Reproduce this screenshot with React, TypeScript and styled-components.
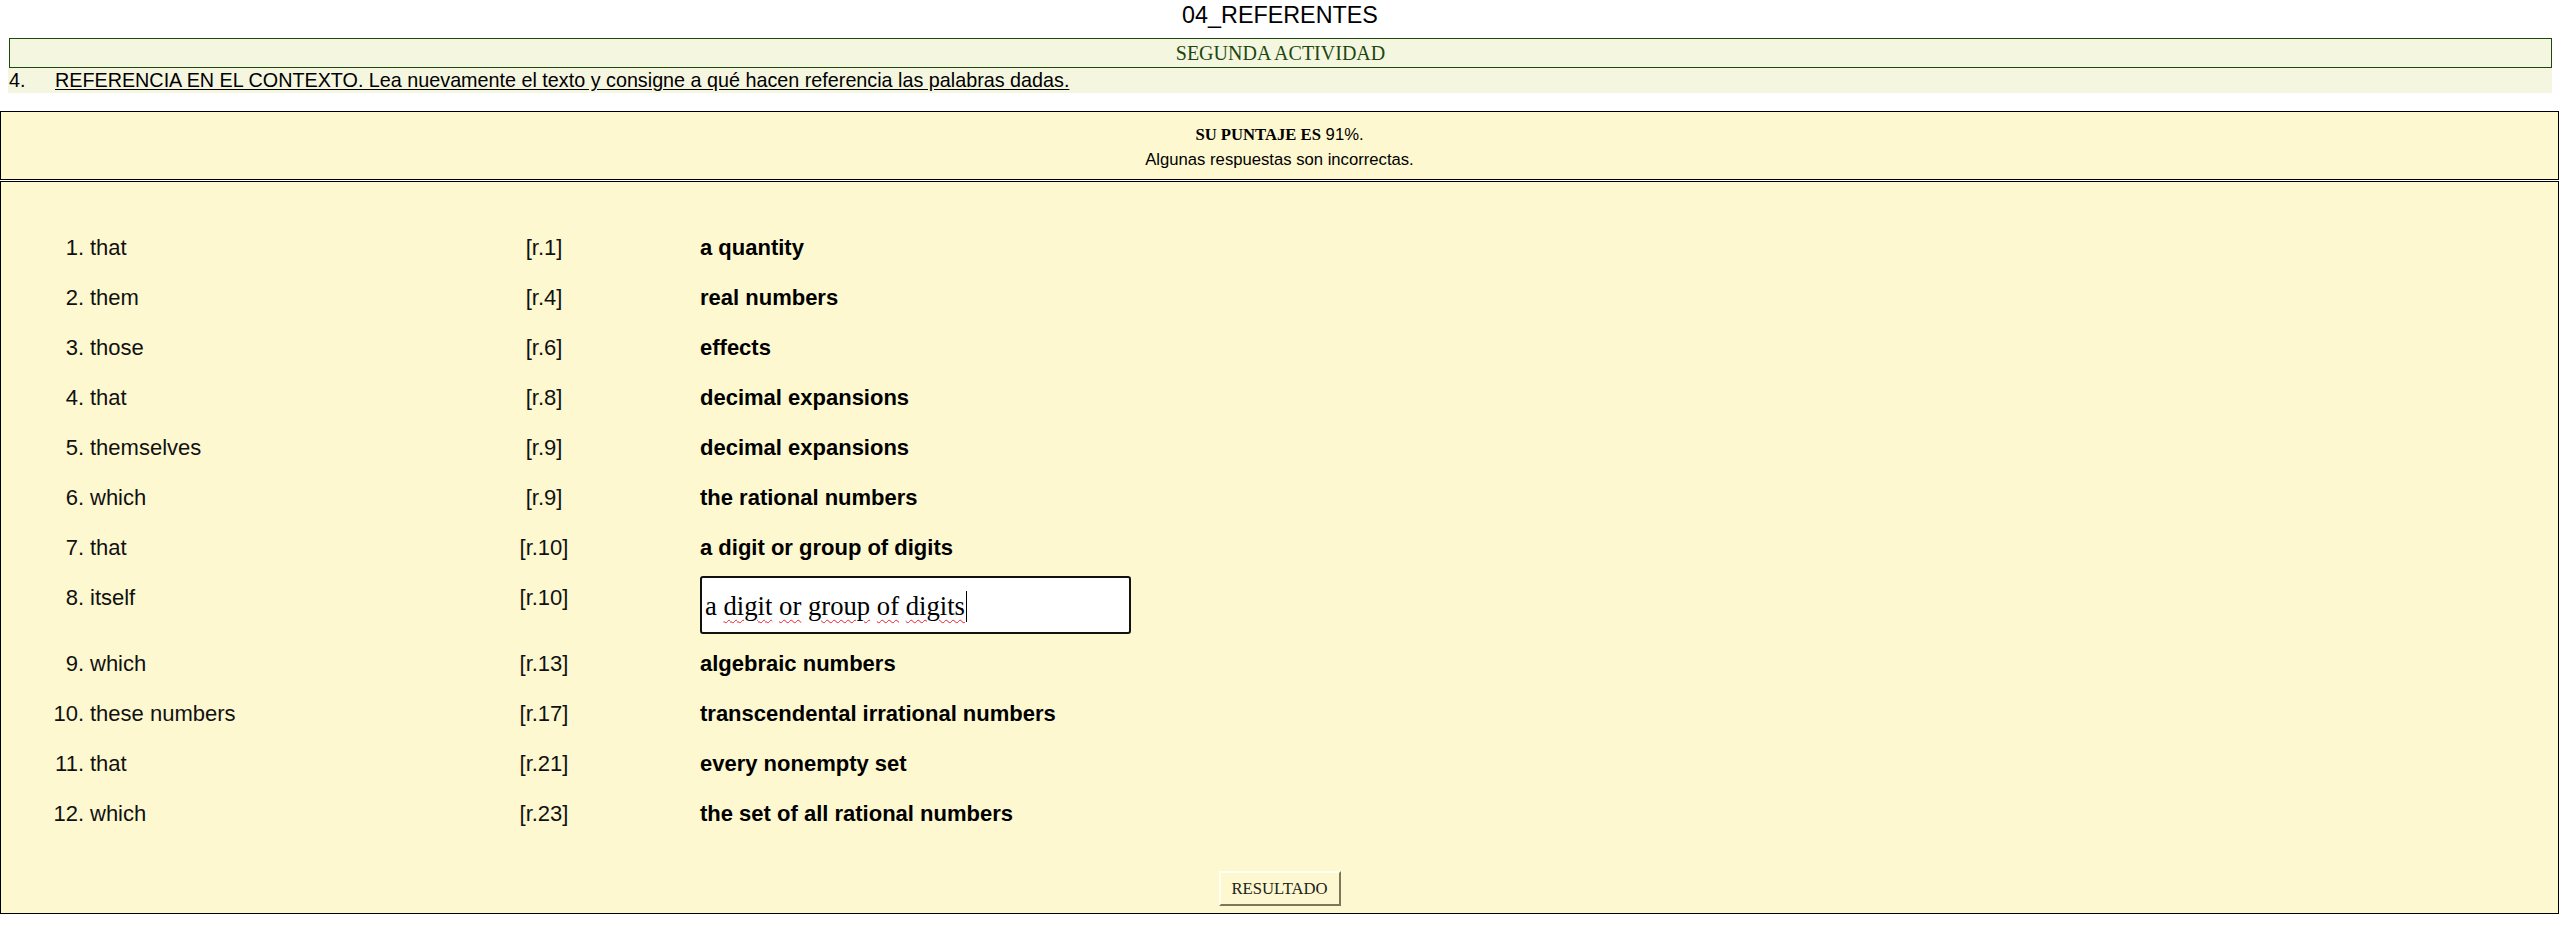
import React from "react";
import styled, { createGlobalStyle } from "styled-components";

const GlobalStyle = createGlobalStyle`
  html, body {
    margin: 0;
    padding: 0;
    background: #ffffff;
    font-family: "Liberation Sans", Arial, sans-serif;
    color: #000;
  }
`;

const Page = styled.div`
  display: flex;
  flex-direction: column;
  padding-right: 3px;
`;

const Header = styled.header`
  display: flex;
  flex-direction: column;
  padding: 0 7px 0 8px;
`;

const Title = styled.h1`
  margin: 0 0 8px 0;
  height: 30px;
  line-height: 30px;
  font-size: 23.33px;
  font-weight: 400;
  text-align: center;
  color: #000;
`;

const ActivityBar = styled.div`
  box-sizing: border-box;
  height: 30px;
  line-height: 28px;
  margin-left: 1px;
  border: 1px solid #1c4810;
  background: #f4f6e0;
  color: #1c4810;
  font-family: "Liberation Serif", "Times New Roman", serif;
  font-size: 20px;
  text-align: center;
`;

const Instruction = styled.div`
  display: flex;
  height: 25px;
  line-height: 25px;
  background: #f4f6e0;
  font-size: 19.75px;
`;

const InstructionNum = styled.span`
  width: 46px;
  padding-left: 1px;
`;

const InstructionText = styled.span`
  text-decoration: underline;
  text-underline-offset: 2px;
`;

const Panel = styled.section`
  box-sizing: border-box;
  border: 1px solid #000;
  background: #fdf8cf;
`;

const ScorePanel = styled(Panel)`
  margin-top: 18px;
  padding: 10px 0 7px;
  text-align: center;
  font-size: 16.67px;
`;

const ScoreLine = styled.div`
  line-height: 25px;
`;

const ScoreLabel = styled.b`
  font-family: "Liberation Serif", "Times New Roman", serif;
  font-weight: 700;
`;

const ExercisePanel = styled(Panel)`
  margin-top: 1px;
  padding: 41px 0 7px;
  display: flex;
  flex-direction: column;
`;

const Rows = styled.ol`
  list-style: none;
  margin: 0;
  padding: 0;
  display: flex;
  flex-direction: column;
`;

const Row = styled.li`
  display: grid;
  grid-template-columns: 89px 298px 312px 1fr;
  align-items: start;
  min-height: 50px;
  font-size: 22px;
  line-height: 50px;
  color: #111;
`;

const Marker = styled.span`
  text-align: right;
  padding-right: 6px;
`;

const Word = styled.span``;

const Ref = styled.span`
  text-align: center;
`;

const Answer = styled.span`
  font-weight: 700;
  color: #000;
`;

const AnswerField = styled.div`
  box-sizing: border-box;
  width: 431px;
  height: 58px;
  margin: 3px 0 5px;
  padding: 2px 0 0 3px;
  display: flex;
  align-items: center;
  background: #ffffff;
  border: 2px solid #111;
  border-radius: 3px;
  font-family: "Liberation Serif", "Times New Roman", serif;
  font-size: 26.67px;
  line-height: 31px;
  color: #000;
  white-space: pre;
`;

const Misspelled = styled.span`
  text-decoration: underline wavy #e8202a;
  text-decoration-thickness: 1px;
  text-underline-offset: 4px;
`;

const Caret = styled.span`
  display: inline-block;
  width: 0;
  height: 31px;
  border-left: 1px solid #000;
  margin-left: 1px;
`;

const ButtonRow = styled.div`
  display: flex;
  justify-content: center;
  margin-top: 32px;
`;

const ResultButton = styled.button`
  box-sizing: border-box;
  width: 122px;
  height: 35px;
  padding: 0;
  background: #fdf8cf;
  border-style: solid;
  border-width: 2px;
  border-color: #fffff4 #7d785c #7d785c #fffff4;
  font-family: "Liberation Serif", "Times New Roman", serif;
  font-size: 16.67px;
  color: #222;
  cursor: pointer;
`;

type Item = { word: string; ref: string; answer: string; editable?: boolean };

const items: Item[] = [
  { word: "that", ref: "[r.1]", answer: "a quantity" },
  { word: "them", ref: "[r.4]", answer: "real numbers" },
  { word: "those", ref: "[r.6]", answer: "effects" },
  { word: "that", ref: "[r.8]", answer: "decimal expansions" },
  { word: "themselves", ref: "[r.9]", answer: "decimal expansions" },
  { word: "which", ref: "[r.9]", answer: "the rational numbers" },
  { word: "that", ref: "[r.10]", answer: "a digit or group of digits" },
  { word: "itself", ref: "[r.10]", answer: "a digit or group of digits", editable: true },
  { word: "which", ref: "[r.13]", answer: "algebraic numbers" },
  { word: "these numbers", ref: "[r.17]", answer: "transcendental irrational numbers" },
  { word: "that", ref: "[r.21]", answer: "every nonempty set" },
  { word: "which", ref: "[r.23]", answer: "the set of all rational numbers" },
];

function EditableAnswer() {
  return (
    <AnswerField role="textbox" aria-label="respuesta 8">
      <span>a </span>
      <Misspelled>digit</Misspelled>
      <span> </span>
      <Misspelled>or</Misspelled>
      <span> </span>
      <Misspelled>group</Misspelled>
      <span> </span>
      <Misspelled>of</Misspelled>
      <span> </span>
      <Misspelled>digits</Misspelled>
      <Caret />
    </AnswerField>
  );
}

export default function App() {
  return (
    <>
      <GlobalStyle />
      <Page>
        <Header>
          <Title>04_REFERENTES</Title>
          <ActivityBar>SEGUNDA ACTIVIDAD</ActivityBar>
          <Instruction>
            <InstructionNum>4.</InstructionNum>
            <InstructionText>
              REFERENCIA EN EL CONTEXTO. Lea nuevamente el texto y consigne a qué hacen referencia las palabras dadas.
            </InstructionText>
          </Instruction>
        </Header>

        <ScorePanel>
          <ScoreLine>
            <ScoreLabel>SU PUNTAJE ES</ScoreLabel> 91%.
          </ScoreLine>
          <ScoreLine>Algunas respuestas son incorrectas.</ScoreLine>
        </ScorePanel>

        <ExercisePanel>
          <Rows>
            {items.map((it, i) => (
              <Row key={i}>
                <Marker>{i + 1}.</Marker>
                <Word>{it.word}</Word>
                <Ref>{it.ref}</Ref>
                {it.editable ? <EditableAnswer /> : <Answer>{it.answer}</Answer>}
              </Row>
            ))}
          </Rows>
          <ButtonRow>
            <ResultButton type="button">RESULTADO</ResultButton>
          </ButtonRow>
        </ExercisePanel>
      </Page>
    </>
  );
}
